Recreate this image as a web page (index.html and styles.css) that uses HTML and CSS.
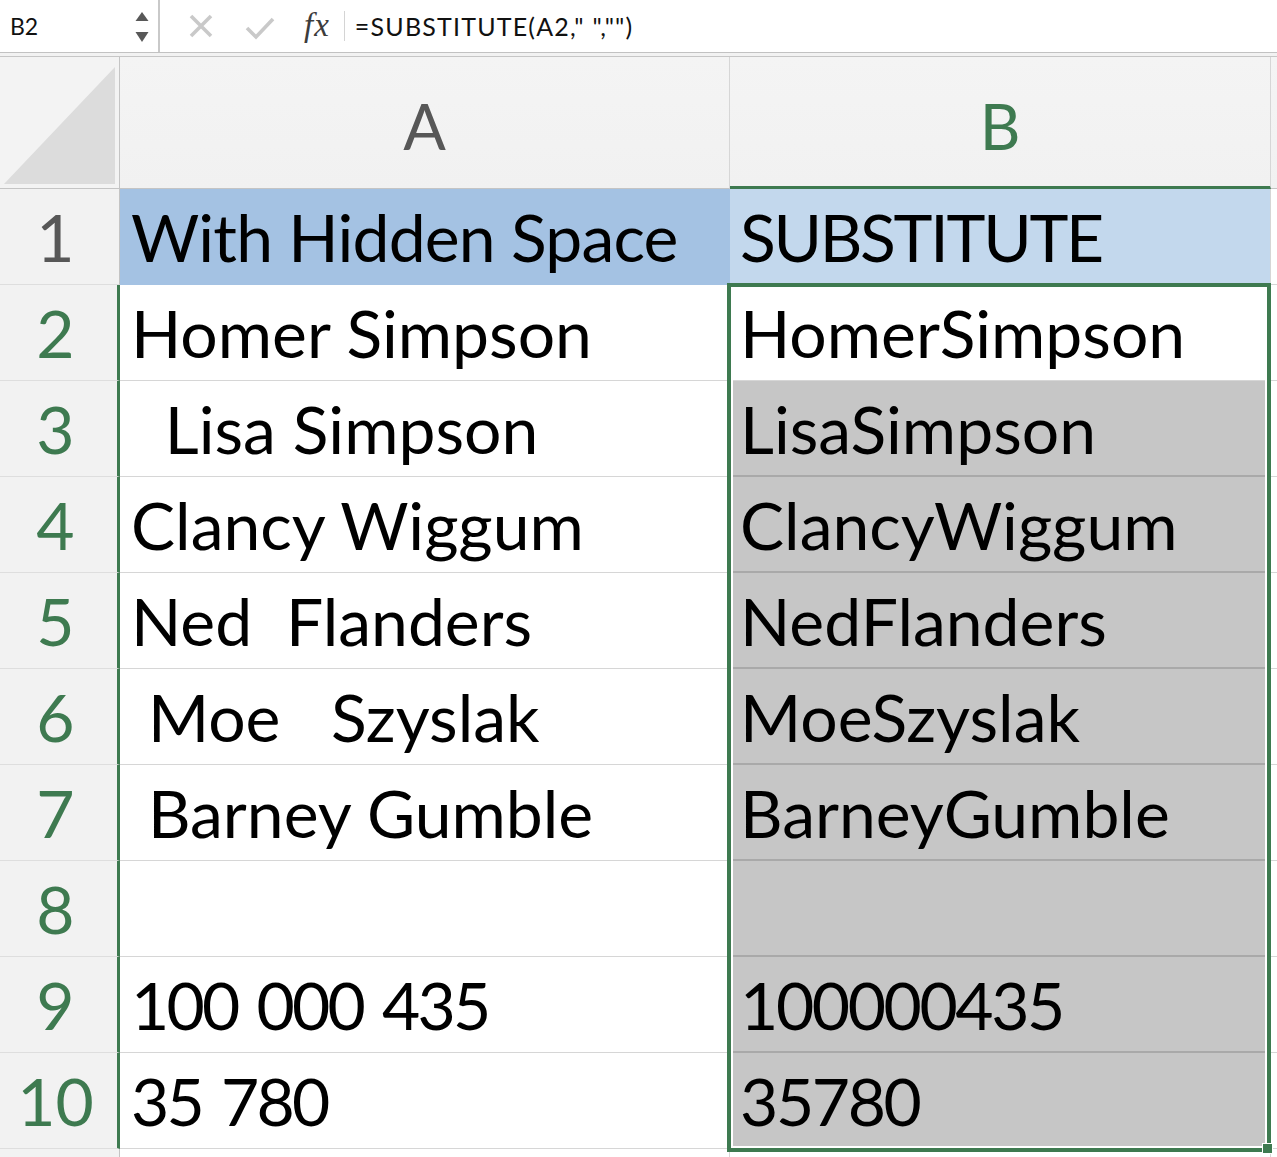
FILE: index.html
```html
<!DOCTYPE html>
<html>
<head>
<meta charset="utf-8">
<link rel="stylesheet" href="styles.css">
</head>
<body>
<div class="formula-bar">
  <div class="name-box">
    <span class="name">B2</span>
    <svg class="spin" width="16" height="34" viewBox="0 0 16 34">
      <polygon points="8,2 14.5,11 1.5,11" fill="#585858"/>
      <polygon points="1.5,22 14.5,22 8,32" fill="#585858"/>
    </svg>
  </div>
  <div class="fb-icons">
    <svg class="ico-x" width="26" height="26" viewBox="0 0 26 26">
      <path d="M3 3 L23 23 M23 3 L3 23" stroke="#c9c9c9" stroke-width="3.6" fill="none"/>
    </svg>
    <svg class="ico-check" width="30" height="24" viewBox="0 0 30 24">
      <path d="M2 12 L11 21 L28 3" stroke="#c9c9c9" stroke-width="3.6" fill="none"/>
    </svg>
    <span class="fx">fx</span>
  </div>
  <div class="fb-sep"></div>
  <div class="formula">=SUBSTITUTE(A2," ","")</div>
</div>
<div class="bar-gap"></div>
<div class="sheet">
  <div class="corner">
    <svg width="119" height="131" viewBox="0 0 119 131"><polygon points="4,127 115,127 115,10" fill="#dcdcdc"/></svg>
  </div>
  <div class="col-head">A</div>
  <div class="col-head active">B</div>
  <div class="col-head rest"></div>

  <div class="row-head">1</div>
  <div class="cell a1">With Hidden Space</div>
  <div class="cell b1">SUBSTITUTE</div>
  <div class="cell rest"></div>

  <div class="row-head sel">2</div>
  <div class="cell">Homer Simpson</div>
  <div class="cell b-act">HomerSimpson</div>
  <div class="cell rest"></div>

  <div class="row-head sel">3</div>
  <div class="cell">  Lisa Simpson</div>
  <div class="cell b-sel">LisaSimpson</div>
  <div class="cell rest"></div>

  <div class="row-head sel">4</div>
  <div class="cell">Clancy Wiggum</div>
  <div class="cell b-sel">ClancyWiggum</div>
  <div class="cell rest"></div>

  <div class="row-head sel">5</div>
  <div class="cell">Ned  Flanders</div>
  <div class="cell b-sel">NedFlanders</div>
  <div class="cell rest"></div>

  <div class="row-head sel">6</div>
  <div class="cell"> Moe   Szyslak</div>
  <div class="cell b-sel">MoeSzyslak</div>
  <div class="cell rest"></div>

  <div class="row-head sel">7</div>
  <div class="cell"> Barney Gumble</div>
  <div class="cell b-sel">BarneyGumble</div>
  <div class="cell rest"></div>

  <div class="row-head sel">8</div>
  <div class="cell"></div>
  <div class="cell b-sel"></div>
  <div class="cell rest"></div>

  <div class="row-head sel">9</div>
  <div class="cell num">100 000 435</div>
  <div class="cell b-sel num">100000435</div>
  <div class="cell rest"></div>

  <div class="row-head sel">10</div>
  <div class="cell num">35 780</div>
  <div class="cell b-sel num">35780</div>
  <div class="cell rest"></div>

  <div class="row-head"></div>
  <div class="cell"></div>
  <div class="cell"></div>
  <div class="cell rest"></div>

  <div class="selection"></div>
  <div class="fill-handle"></div>
</div>
</body>
</html>
```

FILE: styles.css
```css
html, body {
  margin: 0;
  padding: 0;
  background: #ffffff;
  overflow: hidden;
  height: 1157px;
}
body {
  font-family: Lato, "Liberation Sans", sans-serif;
  color: #000;
}

/* ---------- formula bar ---------- */
.formula-bar {
  display: flex;
  align-items: center;
  height: 52px;
  border-bottom: 1px solid #c2c2c2;
  background: #fff;
}
.name-box {
  width: 160px;
  height: 52px;
  display: flex;
  align-items: center;
  justify-content: space-between;
  border-right: 2px solid #c9c9c9;
  padding-left: 10px;
  padding-right: 8px;
  box-sizing: border-box;
}
.name {
  font-size: 23px;
  color: #111;
}
.spin {
  display: block;
  margin-top: 2px;
}
.fb-icons {
  display: flex;
  align-items: center;
  padding-left: 28px;
}
.ico-x {
  display: block;
}
.ico-check {
  display: block;
  margin-left: 31px;
  margin-top: 4px;
}
.fx {
  font-family: "Liberation Serif", serif;
  font-style: italic;
  font-size: 33px;
  color: #3c3c3c;
  margin-left: 29px;
  letter-spacing: 1px;
  margin-top: -2px;
}
.fb-sep {
  width: 1px;
  height: 30px;
  background: #d4d4d4;
  margin-left: 14px;
}
.formula {
  margin-left: 10px;
  font-size: 25px;
  color: #111;
  white-space: pre;
  letter-spacing: 1.2px;
}
.bar-gap {
  height: 3px;
  background: #f2f2f2;
  border-bottom: 1px solid #c6c6c6;
}

/* ---------- sheet ---------- */
.sheet {
  position: relative;
  display: grid;
  grid-template-columns: 120px 610px 541px 1fr;
  grid-template-rows: 132px repeat(10, 96px) 40px;
}
.sheet > div {
  box-sizing: border-box;
}
.corner {
  background: #f3f3f3;
  border-right: 1px solid #c4c4c4;
  border-bottom: 1px solid #c4c4c4;
}
.corner svg {
  display: block;
}
.col-head {
  background: linear-gradient(#f4f4f4, #f1f1f1);
  border-right: 1px solid #d6d6d6;
  border-bottom: 1px solid #c4c4c4;
  display: flex;
  align-items: center;
  justify-content: center;
  font-size: 63px;
  line-height: 1;
  color: #575757;
  padding-top: 6px;
}
.col-head.active {
  color: #3e7a50;
  border-bottom: 3px solid #3e7a50;
  padding-top: 8px;
}
.col-head.rest {
  border-right: none;
}
.row-head {
  background: #f2f2f2;
  border-right: 1px solid #c4c4c4;
  border-bottom: 1px solid #dedede;
  font-size: 66px;
  line-height: 96px;
  text-align: center;
  color: #575757;
  padding-right: 8px;
  white-space: nowrap;
}
.row-head.sel {
  color: #3e7a50;
  border-right: 3px solid #3e7a50;
  padding-right: 6px;
}
.cell {
  border-right: 1px solid #d6d6d6;
  border-bottom: 1px solid #d6d6d6;
  font-size: 66px;
  line-height: 96px;
  padding-left: 11px;
  white-space: pre;
  letter-spacing: 0;
  overflow: hidden;
}
.cell.num {
  letter-spacing: -2.8px;
  word-spacing: 5px;
}
.cell.b-sel.num {
  letter-spacing: -2.4px;
}
.cell.rest {
  border-right: none;
}
.a1 {
  background: #a4c2e3;
  border-right-color: #a4c2e3;
  border-bottom-color: #a4c2e3;
  letter-spacing: -0.8px;
}
.b1 {
  background: #c3d8ed;
  border-bottom-color: #c3d8ed;
  padding-left: 10px;
  letter-spacing: -2.3px;
}
.b-act {
  background: #fff;
  padding-left: 10px;
}
.b-sel {
  background: #c6c6c6;
  border-bottom: 2px solid #a9a9a9;
  padding-left: 10px;
}

/* selection outline over B2:B10 */
.selection {
  position: absolute;
  left: 727px;
  top: 226px;
  width: 544px;
  height: 869px;
  border: 4px solid #3e7a50;
  box-shadow: inset 0 0 0 2px #ffffff;
  box-sizing: border-box;
  pointer-events: none;
}
.fill-handle {
  position: absolute;
  left: 1262px;
  top: 1086px;
  width: 11px;
  height: 11px;
  background: #3e7a50;
  border: 1px solid #ffffff;
  box-sizing: border-box;
}
```
